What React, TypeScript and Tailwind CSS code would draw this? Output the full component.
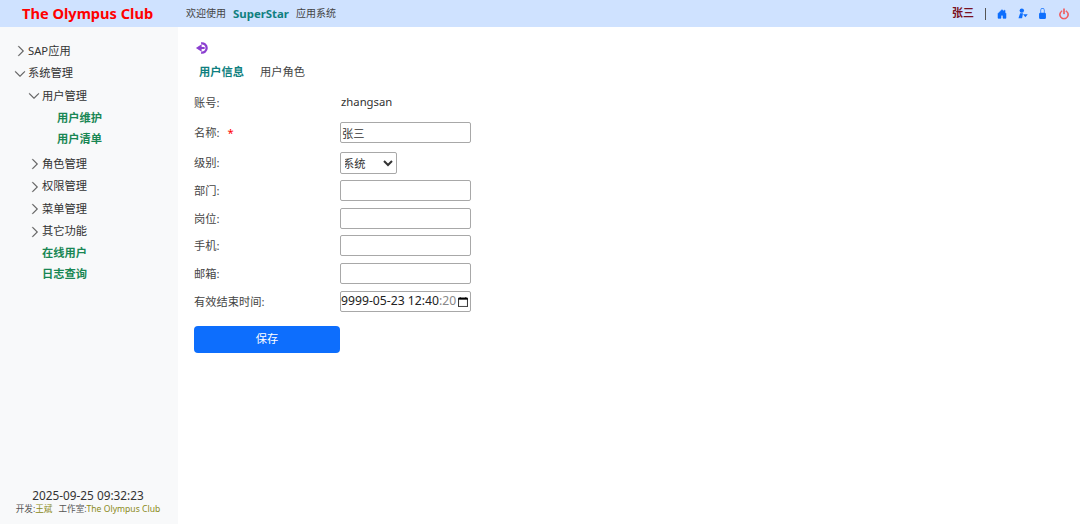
import { BsCalendar, BsChevronDown, BsChevronRight, BsHouseDoorFill, BsLockFill, BsPower } from 'react-icons/bs'

const font = { fontFamily: '"Noto Sans", "Noto Sans CJK SC", sans-serif' }

function Parent({ label, open, className }: { label: string; open?: boolean; className: string }) {
  return (
    <div className={`flex items-center h-[22.5px] text-[11.25px] text-[#333] ${className}`}>
      {open ? (
        <BsChevronDown className="w-[12px] h-[12px] text-[#555] stroke-[0.6px] mr-[2px]" />
      ) : (
        <BsChevronRight className="w-[12px] h-[12px] text-[#555] stroke-[0.6px] mr-px" />
      )}
      <span>{label}</span>
    </div>
  )
}

function Leaf({ label, className }: { label: string; className: string }) {
  return <div className={`h-[21px] flex items-center text-[11.25px] font-bold text-[#198754] ${className}`}>{label}</div>
}

function Row({ label, required, height, children }: { label: string; required?: boolean; height: string; children: React.ReactNode }) {
  return (
    <div className={`flex items-start ${height}`}>
      <div className="w-[146px] h-[21px] pt-[2px] flex items-center text-[11.25px] text-[#444]">
        <span>{label}:</span>
        {required && <span className="text-[#ff0000] ml-[8px]">*</span>}
      </div>
      {children}
    </div>
  )
}

const inputCls = 'w-[131px] h-[21px] border border-[#a8a8a8] rounded-[2px] bg-white px-px text-[11.25px] text-[#333] outline-none'

export default function App() {
  return (
    <div className="w-[1080px] h-[524px] flex flex-col bg-white overflow-hidden" style={font}>
      <header className="h-[27px] shrink-0 bg-[#cfe2ff] flex items-center">
        <div className="w-[186px] pl-[22px] text-[14.6px] font-bold text-[#ff0000]">The Olympus Club</div>
        <div className="flex items-center text-[10px] text-[#444]">
          <span>欢迎使用</span>
          <span className="mx-[7px] text-[11.4px] font-bold text-[#0f7f80]">SuperStar</span>
          <span>应用系统</span>
        </div>
        <div className="ml-auto flex items-center pr-[10px]">
          <span className="text-[11px] font-bold text-[#7a1020]">张三</span>
          <span className="w-px h-[12px] bg-[#555] mx-[11px]" />
          <BsHouseDoorFill className="w-[10px] h-[10px] text-[#0d6efd] stroke-[0.6px] mr-[10px]" />
          <svg viewBox="0 0 16 16" className="w-[11px] h-[11px] text-[#0d6efd] mr-[9px]" fill="currentColor">
            <circle cx="7" cy="3.8" r="3.2" />
            <path d="M4.5 7.5h4.2L7.4 15H2.2z" />
            <path d="M8.8 9.2H15.6L12.2 13.6z" />
          </svg>
          <BsLockFill className="w-[11px] h-[11px] text-[#0d6efd] mr-[10px]" />
          <BsPower className="w-[12px] h-[12px] text-[#f54a4a] stroke-[0.8px]" />
        </div>
      </header>

      <div className="flex flex-1 min-h-0">
        <aside className="w-[178px] shrink-0 bg-[#f8f9fa] flex flex-col pt-[13px] pb-[8px]">
          <Parent label="SAP应用" className="pl-[15px]" />
          <Parent label="系统管理" open className="pl-[14px]" />
          <Parent label="用户管理" open className="pl-[28px]" />
          <Leaf label="用户维护" className="pl-[57px]" />
          <Leaf label="用户清单" className="pl-[57px] mb-[3.5px]" />
          <Parent label="角色管理" className="pl-[29px]" />
          <Parent label="权限管理" className="pl-[29px]" />
          <Parent label="菜单管理" className="pl-[29px]" />
          <Parent label="其它功能" className="pl-[29px]" />
          <Leaf label="在线用户" className="pl-[42px]" />
          <Leaf label="日志查询" className="pl-[42px]" />
          <div className="mt-auto text-center pr-[2px]">
            <div className="text-[11.8px] text-[#333] leading-[14px]">2025-09-25 09:32:23</div>
            <div className="text-[8.6px] text-[#555] leading-[14px]">
              开发:<span className="text-[#8a8a20]">王斌</span>
              <span className="ml-[6px]">工作室:</span>
              <span className="text-[#8a8a20]">The Olympus Club</span>
            </div>
          </div>
        </aside>

        <main className="flex-1 pl-[16px] pt-[14px]">
          <svg viewBox="0 0 16 16" className="w-[14px] h-[14px] ml-px text-[#8b3fd0]" fill="none" stroke="currentColor" strokeWidth="2.6">
            <path d="M7 2.8a5.3 5.3 0 1 1 0 10.4" />
            <path d="M11 8H6" strokeWidth="2.4" />
            <path d="M7.6 3.6 1 8l6.6 4.4z" fill="currentColor" stroke="none" />
          </svg>
          <div className="flex items-center h-[22px] mt-[6px] pl-[5px] text-[11.25px]">
            <span className="font-bold text-[#0f7f80]">用户信息</span>
            <span className="ml-[16px] text-[#444]">用户角色</span>
          </div>
          <div className="mt-[8.5px]">
            <Row label="账号" height="h-[30.5px]">
              <span className="h-[21px] flex items-center text-[11.3px] text-[#333] pl-px">zhangsan</span>
            </Row>
            <Row label="名称" required height="h-[30px]">
              <input readOnly value="张三" className={inputCls} />
            </Row>
            <Row label="级别" height="h-[28px]">
              <select className="w-[57px] h-[22px] border border-[#a8a8a8] rounded-[2px] bg-white text-[11.25px] text-[#333] indent-[-2px]">
                <option>系统</option>
              </select>
            </Row>
            <Row label="部门" height="h-[28px]">
              <input readOnly className={inputCls} />
            </Row>
            <Row label="岗位" height="h-[27px]">
              <input readOnly className={inputCls} />
            </Row>
            <Row label="手机" height="h-[28px]">
              <input readOnly className={inputCls} />
            </Row>
            <Row label="邮箱" height="h-[28px]">
              <input readOnly className={inputCls} />
            </Row>
            <Row label="有效结束时间" height="h-[35px]">
              <div className="w-[131px] h-[21px] border border-[#a8a8a8] rounded-[2px] bg-white pl-0 pr-[2px] flex items-center text-[12.2px] text-[#222] whitespace-nowrap">
                <span>9999-05-23 12:40</span>
                <span className="text-[#888]">:20</span>
                <BsCalendar className="ml-auto w-[10px] h-[10px] text-black stroke-[0.5px]" />
              </div>
            </Row>
          </div>
          <button className="block w-[146px] h-[27px] rounded-[4px] bg-[#0d6efd] text-white text-[11.25px]">保存</button>
        </main>
      </div>
    </div>
  )
}
